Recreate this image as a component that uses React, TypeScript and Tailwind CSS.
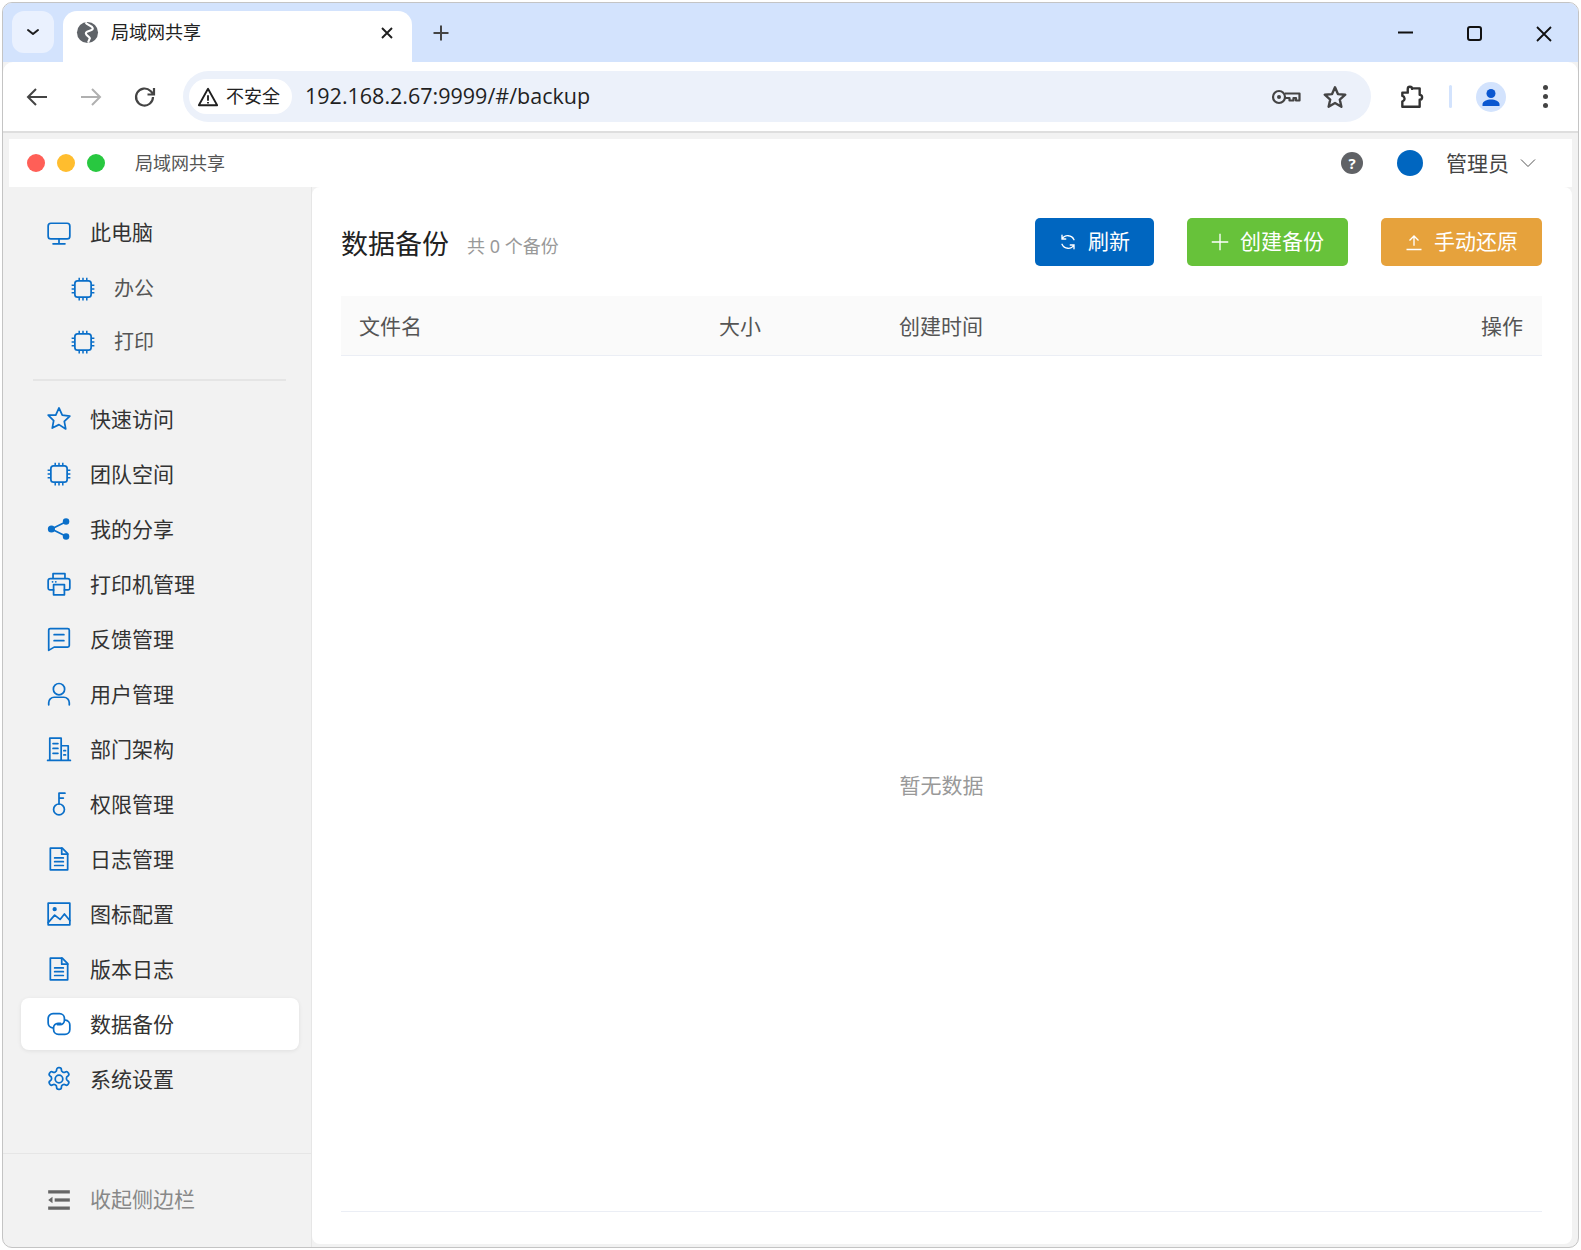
import type { ReactNode } from "react";

const cjk = "font-['Segoe_UI','Noto_Sans','Noto_Sans_CJK_SC',sans-serif]";

function Icon({ children }: { children: ReactNode }) {
  return (
    <svg
      viewBox="0 0 24 24"
      fill="none"
      stroke="currentColor"
      strokeWidth="1.6"
      strokeLinecap="round"
      strokeLinejoin="round"
      className="w-[26px] h-[26px] shrink-0 text-[#0a6fc9]"
    >
      {children}
    </svg>
  );
}

const chip = (
  <Icon>
    <rect x="4.500" y="4.500" width="15" height="15" rx="2.500" />
    <path d="M8.500 1.500v3M12 1.500v3M15.500 1.500v3M8.500 19.500v3M12 19.500v3M15.500 19.500v3M1.500 8.500h3M1.500 12h3M1.500 15.500h3M19.500 8.500h3M19.500 12h3M19.500 15.500h3" strokeWidth="1.400" strokeLinecap="butt" />
  </Icon>
);

const doc = (
  <Icon>
    <path d="M4 2h11l5 5v15H4z" />
    <path d="M14.500 2v5.500H20M8 11h8M8 14.500h8M8 18h8" />
  </Icon>
);

const items: { label: string; icon: ReactNode; active?: boolean }[] = [
  {
    label: "快速访问",
    icon: (
      <Icon>
        <path d="M12 1.800l3 6.600 7 .9-5.100 4.900 1.300 7L12 17.200l-6.200 3.200 1.300-7L2 8.500l7-.1z" />
      </Icon>
    ),
  },
  { label: "团队空间", icon: chip },
  {
    label: "我的分享",
    icon: (
      <Icon>
        <path d="M19 5L5 12l14 7" />
        <circle cx="18.500" cy="5" r="3" fill="currentColor" stroke="none" />
        <circle cx="5" cy="12" r="3.300" fill="currentColor" stroke="none" />
        <circle cx="18.500" cy="19" r="3" fill="currentColor" stroke="none" />
      </Icon>
    ),
  },
  {
    label: "打印机管理",
    icon: (
      <Icon>
        <path d="M6.500 7V2.500h11V7M7 17.500H3.500a1.500 1.500 0 0 1-1.500-1.500V9a2 2 0 0 1 2-2h16a2 2 0 0 1 2 2v7a1.500 1.500 0 0 1-1.500 1.500H17" />
        <path d="M7 12.500h10V22H7zM6 10h.1M9 10h.1" />
      </Icon>
    ),
  },
  {
    label: "反馈管理",
    icon: (
      <Icon>
        <path d="M4 2.500h16A1.500 1.500 0 0 1 21.500 4v14a1.500 1.500 0 0 1-1.500 1.500H7.500l-5 3V4A1.500 1.500 0 0 1 4 2.500z" />
        <path d="M7.500 8h9M7.500 13.500h9" />
      </Icon>
    ),
  },
  {
    label: "用户管理",
    icon: (
      <Icon>
        <circle cx="12" cy="7.500" r="5.200" />
        <path d="M2.500 22v-2a5 5 0 0 1 5-5h9a5 5 0 0 1 5 5v2" />
      </Icon>
    ),
  },
  {
    label: "部门架构",
    icon: (
      <Icon>
        <path d="M1.500 22.500h21M3.500 22V2h10.500v20M14 9h6.500v13M6.500 7h4.500M6.500 11.500h4.500M6.500 16h4.500M16.500 13.500h1.500M16.500 17.500h1.500" />
      </Icon>
    ),
  },
  {
    label: "权限管理",
    icon: (
      <Icon>
        <circle cx="12" cy="17" r="5" />
        <path d="M12 12V2h5.500M12 6.500h4" />
      </Icon>
    ),
  },
  { label: "日志管理", icon: doc },
  {
    label: "图标配置",
    icon: (
      <Icon>
        <rect x="2" y="2" width="20" height="20" />
        <path d="M2 20l6-7 5 4 4-5 5 6" />
        <circle cx="8" cy="7.500" r="1.200" fill="currentColor" />
      </Icon>
    ),
  },
  { label: "版本日志", icon: doc },
  {
    label: "数据备份",
    active: true,
    icon: (
      <Icon>
        <path d="M6 15.500A4.500 4.500 0 0 1 2 11V7a4.500 4.500 0 0 1 4.500-4.500h6A4.500 4.500 0 0 1 17 7v1.500a4 4 0 0 1-4 4h-2.500" />
        <path d="M18 8.500A4.500 4.500 0 0 1 22 13v4a4.500 4.500 0 0 1-4.500 4.500h-6A4.500 4.500 0 0 1 7 17v-1.500a4 4 0 0 1 4-4h2.500" />
      </Icon>
    ),
  },
  {
    label: "系统设置",
    icon: (
      <Icon>
        <path d="M12.220 1.500h-.44a2 2 0 0 0-2 2v.18a2 2 0 0 1-1 1.730l-.43.250a2 2 0 0 1-2 0l-.15-.080a2 2 0 0 0-2.730.730l-.22.380a2 2 0 0 0 .73 2.730l.15.100a2 2 0 0 1 1 1.720v.510a2 2 0 0 1-1 1.740l-.15.090a2 2 0 0 0-.73 2.730l.22.380a2 2 0 0 0 2.730.730l.15-.080a2 2 0 0 1 2 0l.43.250a2 2 0 0 1 1 1.730v.320a2 2 0 0 0 2 2h.44a2 2 0 0 0 2-2v-.320a2 2 0 0 1 1-1.730l.43-.250a2 2 0 0 1 2 0l.15.080a2 2 0 0 0 2.730-.730l.22-.390a2 2 0 0 0-.73-2.730l-.15-.080a2 2 0 0 1-1-1.740v-.5a2 2 0 0 1 1-1.740l.15-.090a2 2 0 0 0 .73-2.730l-.22-.380a2 2 0 0 0-2.730-.730l-.15.080a2 2 0 0 1-2 0l-.43-.250a2 2 0 0 1-1-1.730V3.500a2 2 0 0 0-2-2z" />
        <circle cx="12" cy="12" r="3.500" />
      </Icon>
    ),
  },
];

function SideRow({ label, icon, active }: { label: string; icon: ReactNode; active?: boolean }) {
  return (
    <div
      className={`flex items-center h-[52px] mb-[3px] ml-[18px] mr-[12px] pl-[25px] rounded-lg text-[21px] text-[#333] ${
        active ? "bg-white shadow-[0_1px_4px_rgba(0,0,0,0.08)]" : ""
      }`}
    >
      {icon}
      <span className="ml-[18px] pt-[2px]">{label}</span>
    </div>
  );
}

function SubRow({ label }: { label: string }) {
  return (
    <div className="flex items-center h-[50px] mb-[3px] ml-[18px] pl-[49px] text-[20px] text-[#555]">
      {chip}
      <span className="ml-[18px]">{label}</span>
    </div>
  );
}

function ChromeBar() {
  return (
    <>
      {/* Tabs */}
      <div className="flex h-[59px] bg-[#d3e3fd] shrink-0 pl-[9px] pt-[8px]">
        <div className="w-[42px] h-[42px] rounded-xl bg-[#eaf1fe] flex items-center justify-center">
          <svg viewBox="0 0 16 16" className="w-[16px] h-[16px]" fill="none" stroke="#1f1f1f" strokeWidth="2" strokeLinecap="round" strokeLinejoin="round">
            <path d="M3 6l5 4 5-4" />
          </svg>
        </div>
        <div className="ml-[9px] w-[349px] h-[51px] bg-white rounded-t-[14px] flex items-center pl-[13px] pr-[17px] pb-[8px]">
          <svg viewBox="0 0 24 24" className="w-[23px] h-[23px] shrink-0" fill="none">
            <circle cx="12" cy="12" r="11" fill="#5f6368" />
            <path d="M10 1.500C11 4.500 17 4.500 17.500 7.500 18 10.500 12 9.500 10.500 12 9 14.500 14 16 14.500 18L12.500 22.500" stroke="#fff" strokeWidth="2.200" />
          </svg>
          <span className="ml-[12px] text-[18px] text-[#222] flex-1">局域网共享</span>
          <svg viewBox="0 0 16 16" className="w-[16px] h-[16px]" fill="none" stroke="#1f1f1f" strokeWidth="1.900">
            <path d="M3 3l10 10M13 3L3 13" />
          </svg>
        </div>
        <div className="ml-[19px] h-[51px] flex items-center pb-[8px]">
          <svg viewBox="0 0 20 20" className="w-[20px] h-[20px]" fill="none" stroke="#444" strokeWidth="2">
            <path d="M10 2.500v15M2.500 10h15" />
          </svg>
        </div>
        <div className="ml-auto flex items-start">
          <svg viewBox="0 0 18 18" className="w-[18px] h-[18px] mt-[13px] mr-[52px]" fill="none" stroke="#111" strokeWidth="2">
            <path d="M1 8.500h15" />
          </svg>
          <div className="w-[15px] h-[15px] mt-[15px] mr-[53px] border-2 border-[#111] rounded-[3px]" />
          <svg viewBox="0 0 18 18" className="w-[18px] h-[18px] mt-[14px] mr-[25px]" fill="none" stroke="#111" strokeWidth="1.800">
            <path d="M2 2l14 14M16 2L2 16" />
          </svg>
        </div>
      </div>

      {/* Toolbar */}
      <div className="flex items-center h-[71px] shrink-0 bg-white rounded-t-[10px] border-b-2 border-[#dedede] relative">
        <svg viewBox="0 0 24 24" className="w-[24px] h-[24px] absolute left-[22px] top-[23px]" fill="none" stroke="#444" strokeWidth="2">
          <path d="M22 12H3M11 4l-8 8 8 8" />
        </svg>
        <svg viewBox="0 0 24 24" className="w-[24px] h-[24px] absolute left-[76px] top-[23px]" fill="none" stroke="#b0b0b0" strokeWidth="2">
          <path d="M2 12h19M13 4l8 8-8 8" />
        </svg>
        <svg viewBox="0 0 24 24" className="w-[24px] h-[24px] absolute left-[130px] top-[23px]" fill="none" stroke="#444" strokeWidth="2.200">
          <path d="M20 12a8.500 8.500 0 1 1-2.500-6L21 9.500M21 3v6.500h-6.500" />
        </svg>

        <div className="ml-[180px] w-[1188px] h-[51px] rounded-full bg-[#ecf1fa] flex items-center pl-[6px]">
          <div className="w-[103px] h-[35px] rounded-full bg-white flex items-center pl-[8px]">
            <svg viewBox="0 0 24 24" className="w-[22px] h-[22px] shrink-0" fill="none" stroke="#1f1f1f" strokeWidth="2" strokeLinejoin="round">
              <path d="M12 3L2 21h20zM12 10v6M12 17.500v1.500" />
            </svg>
            <span className="ml-[7px] text-[18px] text-[#222]">不安全</span>
          </div>
          <span className="ml-[13px] mb-[1px] text-[21.500px] text-[#1f1f1f] font-['Open_Sans',sans-serif]">192.168.2.67:9999/#/backup</span>
          <svg viewBox="0 0 30 20" className="ml-auto w-[30px] h-[20px]" fill="none" stroke="#444" strokeWidth="2.200" strokeLinejoin="round">
            <circle cx="8" cy="10" r="6" />
            <circle cx="8" cy="10" r="2" fill="#444" stroke="none" />
            <path d="M14 6.500h14.500v7h-3.500v-2.500h-2.500v2.500h-4v-2.500H14" />
          </svg>
          <svg viewBox="0 0 24 24" className="ml-[21px] mr-[23px] w-[26px] h-[26px]" fill="none" stroke="#444" strokeWidth="2.200" strokeLinejoin="round">
            <path d="M12 3l2.700 6.300 6.800.6-5.100 4.500 1.500 6.600-5.900-3.500L6.100 21l1.500-6.600-5.100-4.500 6.800-.6z" />
          </svg>
        </div>

        <svg viewBox="0 0 24 24" className="ml-[27px] w-[26px] h-[26px]" fill="none" stroke="#333" strokeWidth="2.200" strokeLinejoin="round">
          <path d="M4 8h5V4.500a2 2 0 0 1 4 0V4h7v6a2.200 2.200 0 0 1 0 4.500V21H4v-5a2.500 2.500 0 0 0 2-3 2.500 2.500 0 0 0-2-2z" />
        </svg>
        <div className="ml-[25px] w-[3px] h-[23px] bg-[#d3e3fd] rounded" />
        <div className="ml-[24px] w-[30px] h-[30px] rounded-full bg-[#d3e3fd] flex items-center justify-center overflow-hidden">
          <svg viewBox="0 0 24 24" className="w-[24px] h-[24px]" fill="#0b57d0">
            <circle cx="12" cy="8.500" r="4.500" />
            <path d="M3.500 21v-1.500C3.500 16 8 14.500 12 14.500s8.500 1.500 8.500 5V21z" />
          </svg>
        </div>
        <div className="ml-[37px] flex flex-col gap-[4px]">
          <div className="w-[5px] h-[5px] rounded-full bg-[#444]" />
          <div className="w-[5px] h-[5px] rounded-full bg-[#444]" />
          <div className="w-[5px] h-[5px] rounded-full bg-[#444]" />
        </div>
      </div>
    </>
  );
}

export default function App() {
  return (
    <div className={`w-[1581px] h-[1250px] bg-white p-[2px] ${cjk}`}>
      <div className="w-full h-full border border-[#c4c4c4] rounded-[10px] overflow-hidden flex flex-col bg-[#f2f2f2]">
        <ChromeBar />

        {/* App header */}
        <div className="flex items-center h-[48px] shrink-0 mt-[6px] mx-[6px] bg-white pl-[18px]">
          <div className="w-[18px] h-[18px] rounded-full bg-[#ff5f57]" />
          <div className="ml-[12px] w-[18px] h-[18px] rounded-full bg-[#ffbd2e]" />
          <div className="ml-[12px] w-[18px] h-[18px] rounded-full bg-[#28c840]" />
          <span className="ml-[30px] text-[18px] text-[#555]">局域网共享</span>
          <div className="ml-auto w-[22px] h-[22px] rounded-full bg-[#606266] text-white text-[15px] font-bold flex items-center justify-center">?</div>
          <div className="ml-[34px] w-[26px] h-[26px] rounded-full bg-[#0066c0]" />
          <span className="ml-[23px] pt-[2px] text-[21px] text-[#444]">管理员</span>
          <svg viewBox="0 0 16 16" className="ml-[11px] mr-[36px] w-[16px] h-[16px]" fill="none" stroke="#555" strokeWidth="1">
            <path d="M1 4.500l7 7 7-7" />
          </svg>
        </div>

        <div className="flex flex-1 min-h-0">
          {/* Sidebar */}
          <aside className="w-[309px] shrink-0 flex flex-col border-r border-[#e6e6e6] pt-[20px]">
            <div className="flex items-center h-[52px] mb-[5px] ml-[18px] pl-[25px] text-[21px] text-[#333]">
              <Icon>
                <rect x="2" y="3" width="20" height="14.500" rx="2.500" />
                <path d="M12 17.500V22M6.500 22h11" />
              </Icon>
              <span className="ml-[18px]">此电脑</span>
            </div>
            <SubRow label="办公" />
            <SubRow label="打印" />
            <div className="h-[2px] bg-[#e5e5e5] ml-[30px] mr-[25px] mt-[9px] mb-[12px]" />
            {items.map((it) => (
              <SideRow key={it.label} label={it.label} icon={it.icon} active={it.active} />
            ))}
            <div className="mt-auto h-[94px] border-t border-[#e6e6e6] flex items-center pl-[43px] pb-[2px] text-[21px] text-[#888]">
              <svg viewBox="0 0 24 24" className="w-[26px] h-[26px]" fill="#666">
                <rect x="2" y="3" width="20" height="3" />
                <rect x="8" y="10.500" width="14" height="3" />
                <rect x="2" y="18" width="20" height="3" />
                <path d="M6 9v6l-4-3z" />
              </svg>
              <span className="ml-[18px]">收起侧边栏</span>
            </div>
          </aside>

          {/* Main panel */}
          <main className="flex-1 min-w-0 mr-[6px] mb-[3px] bg-white rounded-lg pl-[29px] pr-[30px] pt-[31px] flex flex-col">
            <div className="flex items-center h-[48px] shrink-0">
              <h1 className="text-[27px] text-[#222] pt-[4px]">数据备份</h1>
              <span className="ml-[18px] mt-[8px] text-[18px] text-[#999]">共 0 个备份</span>
              <button className="ml-auto w-[119px] h-[48px] rounded-[5px] bg-[#0066c0] text-white text-[21px] flex items-center justify-center">
                <svg viewBox="0 0 24 24" className="w-[18px] h-[18px] mr-[11px]" fill="none" stroke="#fff" strokeWidth="1.800" strokeLinecap="round">
                  <path d="M4 8a9 9 0 0 1 16 1M20 16a9 9 0 0 1-16-1M4 3v5h5M20 21v-5h-5" />
                </svg>
                刷新
              </button>
              <button className="ml-[33px] w-[161px] h-[48px] rounded-[5px] bg-[#67c23a] text-white text-[21px] flex items-center justify-center">
                <svg viewBox="0 0 24 24" className="w-[18px] h-[18px] mr-[11px]" fill="none" stroke="#fff" strokeWidth="1.800">
                  <path d="M12 1v22M1 12h22" />
                </svg>
                创建备份
              </button>
              <button className="ml-[33px] w-[161px] h-[48px] rounded-[5px] bg-[#e6a23c] text-white text-[21px] flex items-center justify-center">
                <svg viewBox="0 0 24 24" className="w-[18px] h-[18px] mr-[11px]" fill="none" stroke="#fff" strokeWidth="1.800">
                  <path d="M2 22h20M12 17V4M6 10l6-6 6 6" />
                </svg>
                手动还原
              </button>
            </div>

            <div className="flex items-center h-[60px] mt-[30px] pt-[3px] shrink-0 bg-[#fafafa] border-b border-[#ebeef5] text-[21px] text-[#555]">
              <span className="ml-[18px] w-[360px]">文件名</span>
              <span className="w-[180px]">大小</span>
              <span>创建时间</span>
              <span className="ml-auto mr-[19px]">操作</span>
            </div>

            <div className="flex-1 flex items-center justify-center border-b border-[#ebeef5] mb-[32px] pt-[4px] text-[21px] text-[#999]">
              暂无数据
            </div>
          </main>
        </div>
      </div>
    </div>
  );
}
